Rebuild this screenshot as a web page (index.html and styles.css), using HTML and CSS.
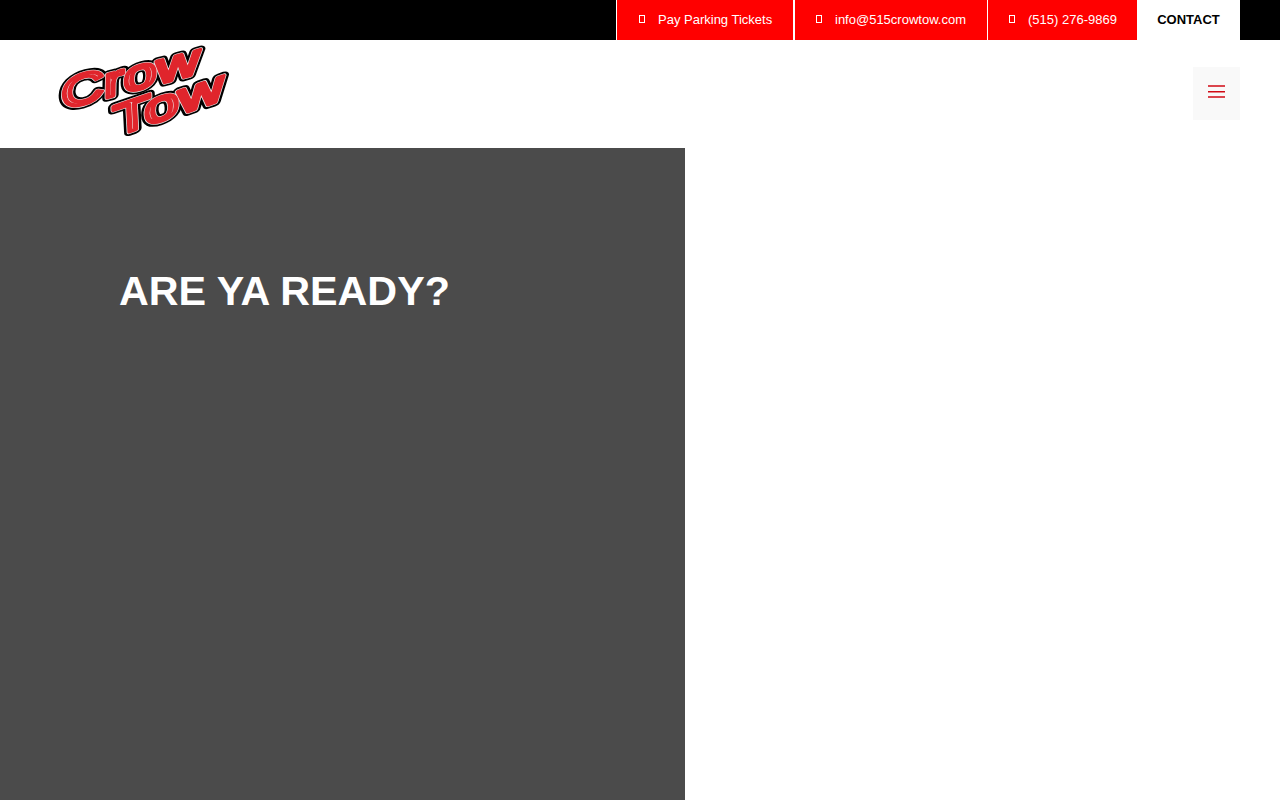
FILE: index.html
```html
<!DOCTYPE html>
<html lang="en">
<head>
    <meta charset="UTF-8">
    <meta name="viewport" content="width=device-width, initial-scale=1.0">
    <title>Crow Tow</title>
    <link rel="stylesheet" href="styles.css">
</head>
<body>
    <div class="topbar">
        <a class="top-link link-pay"><span class="tofu"></span>Pay Parking Tickets</a>
        <a class="top-link link-mail"><span class="tofu"></span>info@515crowtow.com</a>
        <a class="top-link link-phone"><span class="tofu"></span>(515) 276-9869</a>
        <a class="top-contact">CONTACT</a>
    </div>

    <header class="header">
        <svg class="logo" width="190" height="108" viewBox="0 0 190 108" role="img" aria-label="Crow Tow">
            <g class="logo-word" transform="translate(11 70) rotate(-15) skewX(-16) scale(1.46 1)">
                <text class="logo-black">Crow</text>
                <text class="logo-white">Crow</text>
                <text class="logo-red">Crow</text>
            </g>
            <g class="logo-word" transform="translate(64 97) rotate(-19) skewX(-16) scale(1.56 1)">
                <text class="logo-black">Tow</text>
                <text class="logo-white">Tow</text>
                <text class="logo-red">Tow</text>
            </g>
        </svg>
        <button class="menu-btn" aria-label="Menu">
            <svg width="17" height="14" viewBox="0 0 17 14">
                <path d="M0 1H17M0 6.7H17M0 12H17" stroke="#d10a14" stroke-width="1.5" fill="none"/>
            </svg>
        </button>
    </header>

    <main class="hero">
        <section class="hero-left">
            <h1>ARE YA READY?</h1>
        </section>
    </main>
</body>
</html>
```

FILE: styles.css
```css
html, body {
    height: 100%;
}
body {
    margin: 0;
    font-family: "Liberation Sans", Arial, sans-serif;
    background: #fff;
    overflow: hidden;
    display: flex;
    flex-direction: column;
}
.topbar {
    height: 40px;
    background: #000;
    display: flex;
    justify-content: flex-end;
    padding-right: 40px;
    flex: none;
}
.top-link {
    display: flex;
    align-items: center;
    box-sizing: border-box;
    background: #f00;
    color: #fff;
    font-size: 13px;
    border-left: 1px solid #fff;
    padding: 0 0 2px 22px;
}
.link-pay { width: 177px; }
.link-mail { width: 194px; border-left-width: 2px; padding-left: 21px; }
.link-phone { width: 150px; padding-left: 21px; }
.tofu {
    width: 4px;
    height: 6px;
    border: 1px solid #fff;
    margin-right: 13px;
    flex: none;
}
.top-contact {
    width: 103px;
    display: flex;
    align-items: center;
    justify-content: center;
    box-sizing: border-box;
    padding-bottom: 2px;
    background: #fff;
    color: #000;
    font-size: 13px;
    font-weight: bold;
}
.header {
    height: 108px;
    flex: none;
    display: flex;
    justify-content: space-between;
    padding: 0 40px 0 50px;
}
.logo {
    overflow: visible;
}
.logo-word text {
    font-family: "Liberation Sans", Arial, sans-serif;
    font-size: 42px;
    fill: none;
    stroke-linejoin: round;
    stroke-linecap: round;
}
.logo-black {
    stroke: #000;
    stroke-width: 8px;
}
.logo-white {
    stroke: #eee;
    stroke-width: 4.5px;
}
.logo-red {
    stroke: #e0252c;
    stroke-width: 3.5px;
}
.menu-btn {
    width: 47px;
    height: 53px;
    margin-top: 27px;
    background: #f9f9f9;
    border: 0;
    padding: 0 0 4px;
    display: flex;
    align-items: center;
    justify-content: center;
}
.hero {
    flex: 1;
    display: flex;
}
.hero-left {
    width: 685px;
    background: #4b4b4b;
    padding: 119px 0 0 119px;
    box-sizing: border-box;
}
.hero-left h1 {
    margin: 0;
    color: #fff;
    font-size: 41.25px;
    line-height: 48px;
    font-weight: bold;
}
```
